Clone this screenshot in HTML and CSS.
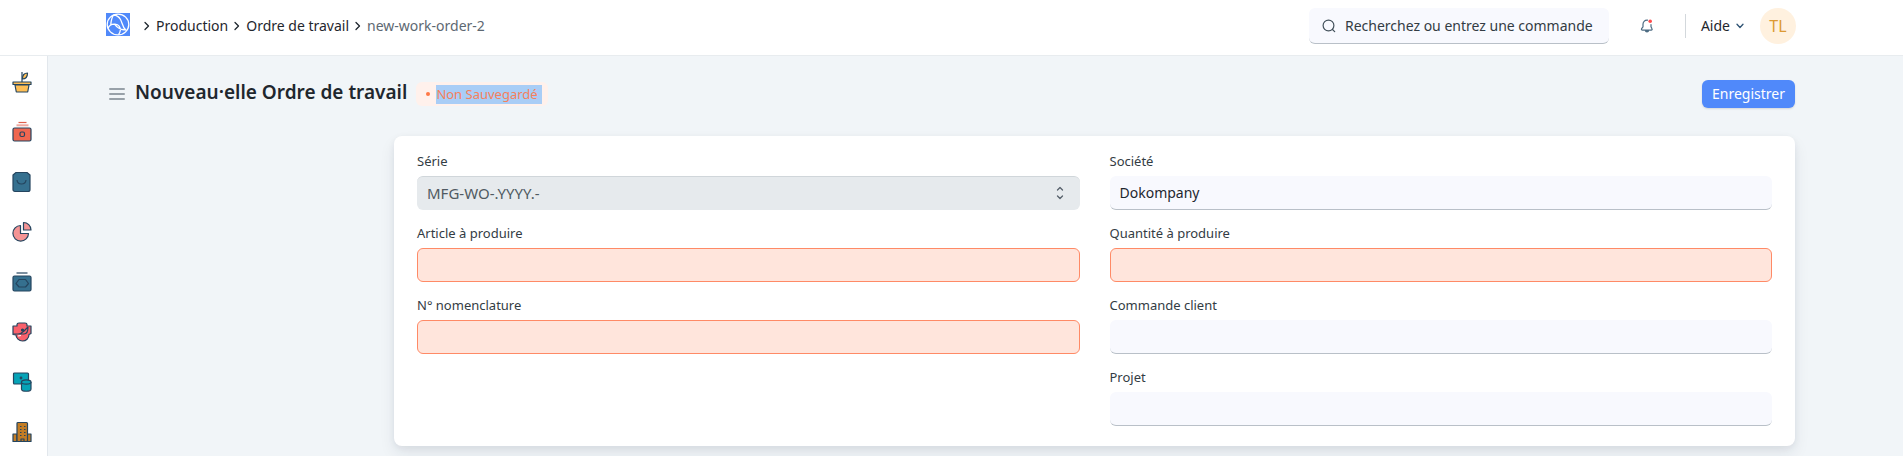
FILE: index.html
```html
<!DOCTYPE html>
<html lang="fr">
<head>
<meta charset="utf-8">
<meta name="viewport" content="width=device-width, initial-scale=1">
<title>Nouveau·elle Ordre de travail</title>
<link rel="stylesheet" href="styles.css">
</head>
<body>
<header class="navbar">
  <a class="logo" href="#" aria-label="Accueil">
    <svg width="24" height="23" viewBox="0 0 24 23" fill="none" stroke="#fff" stroke-width="1.3"><rect width="24" height="23" fill="#5089fa" stroke="none"/><ellipse cx="12" cy="11.500" rx="10.800" ry="10.400"/><path d="M7.500 2c3 .2 5.500 1.800 7 4.500 1.800 3.300 2.200 7.500 5.300 11M7.500 2C5.800 4.500 5 7.500 4.700 12.500M2 15.500c1-3 4-4.500 7-4.300 4 .3 5.800 3.300 5.300 6.300-.2 1.500-.8 2.800-1.800 4.200M8.500 11.200c3.500 4.600 7 6.300 11.500 5.300"/></svg>
  </a>
  <nav class="breadcrumb" aria-label="Fil d'Ariane">
    <svg class="sep" width="8" height="10" viewBox="0 0 8 10"><path d="M2 1.500 5.500 5 2 8.500"/></svg>
    <a href="#">Production</a>
    <svg class="sep" width="8" height="10" viewBox="0 0 8 10"><path d="M2 1.500 5.500 5 2 8.500"/></svg>
    <a href="#">Ordre de travail</a>
    <svg class="sep" width="8" height="10" viewBox="0 0 8 10"><path d="M2 1.500 5.500 5 2 8.500"/></svg>
    <a class="current" href="#">new-work-order-2</a>
  </nav>
  <label class="search">
    <svg width="14" height="14" viewBox="0 0 14 14" fill="none" stroke="#43515b" stroke-width="1.2" stroke-linecap="round"><circle cx="6.500" cy="6.500" r="5.400"/><path d="m10.500 10.500 2.200 2.200"/></svg>
    <input type="text" placeholder="Recherchez ou entrez une commande" aria-label="Recherchez ou entrez une commande">
  </label>
  <button class="bell" type="button" aria-label="Notifications">
    <svg width="14" height="14" viewBox="0 0 14 14" fill="none" stroke="#4c6b82" stroke-width="1.200" stroke-linejoin="round" stroke-linecap="round"><path d="M7.500 1.200C4.500 1 3 3 3 5.200v2.600L1.600 9.700c-.4.700 0 1.400.8 1.400h8.800c.8 0 1.200-.7.800-1.400L11 7.800V5.600"/><path d="M5.500 11.500c0 2 3 2 3 0z" fill="#4c6b82"/><circle cx="10.200" cy="2.200" r="1.800" fill="#ff4d4d" stroke="none"/></svg>
  </button>
  <span class="divider"></span>
  <button class="help" type="button">Aide
    <svg width="8" height="6" viewBox="0 0 8 6" fill="none" stroke="#2f5374" stroke-width="1.300" stroke-linecap="round" stroke-linejoin="round"><path d="M1 1.200 4 4.500l3-3.300"/></svg>
  </button>
  <button class="avatar" type="button">TL</button>
</header>

<div class="layout">
  <nav class="rail" aria-label="Modules">
    <a href="#" aria-label="Agriculture"><svg viewBox="0 0 20 22"><path class="yellow" d="M3 14h14l-1.300 7H4.300z"/><path class="yellow" d="M1 11h18v2.500H1z"/><path d="M10 11V1"/><path class="yellow" d="M10.500 8c-.2-4 1.800-6 5-6 0 3.500-1.500 6-5 6z"/></svg></a>
    <a href="#" aria-label="Caisse"><svg viewBox="0 0 20 22"><path d="M6.500 1.500h8" style="stroke:#e0604c"/><path d="M4.500 4.300h12" style="stroke:#f0a9a0;stroke-width:2"/><rect class="red" x="1" y="7" width="18" height="13" rx="1.500"/><rect x="8" y="11" width="4.500" height="4.500" rx="1.500" fill="none"/></svg></a>
    <a href="#" aria-label="Achats"><svg viewBox="0 0 20 22"><path class="blue" d="M4 1.500h11L18 4v14.500c0 1.200-.7 2-2 2H3c-1.300 0-2-.8-2-2V4z"/><path d="M5 9c.2 2 1.800 4 4.500 4s4.300-2 4.500-4" fill="none"/></svg></a>
    <a href="#" aria-label="Rapports"><svg viewBox="0 0 20 22"><path class="pink" d="M8.500 4.500v8h8a7.800 7.800 0 1 1-8-8z"/><path class="pink" d="M11.500 1.500c4 0 7.500 3.200 7.500 7.500h-7.500z"/></svg></a>
    <a href="#" aria-label="Paie"><svg viewBox="0 0 20 22"><path d="M4.500 2h11"/><rect class="blue" x="1" y="5" width="18" height="15" rx="1.500"/><path class="blue" d="M7 8.500h6.500l3 4-3 3.500H7l-3-3.500z"/></svg></a>
    <a href="#" aria-label="Soudure"><svg viewBox="0 0 20 22"><path class="rose" d="M5 5V3.500c0-1 1-1.500 2-1.500h6c1 0 2 .5 2 1.500V5h4v7.500l-2 1c0 4-3 6.500-6.500 6.500S4 17 4 14l-3-.5V5z"/><path d="M1 13h5c3 0 4-1 6-3l4-4M4 13h8c3 0 4-3 4-7" fill="none"/><circle cx="10.500" cy="9" r="1" fill="#25455f"/><path d="m6 15 3-.5" style="stroke:#fff"/></svg></a>
    <a href="#" aria-label="Stock"><svg viewBox="0 0 20 22"><rect class="teal" x="1.500" y="2" width="15" height="11" rx="1"/><circle cx="9" cy="7" r=".8"/><path class="teal" d="M9.500 11v7c0 3 9.500 3 9.500 0v-7"/><ellipse class="teal" cx="14.250" cy="11" rx="4.750" ry="2.200"/></svg></a>
    <a href="#" aria-label="Société"><svg viewBox="0 0 20 22"><path class="brown" d="M1 13h4v7.500H1zM15 13h4v7.500h-4z"/><rect class="brown" x="5" y="1.500" width="10.500" height="19" rx="1"/><path d="M8 5.500h1.500M12 5.500h1.500M8 8.500h1.500M12 8.500h1.500M8 11.500h1.500M12 11.500h1.500M8 14.500h1.500M12 14.500h1.500M9 20v-2h3v2"/></svg></a>
  </nav>

  <main class="page">
    <div class="page-head">
      <button class="menu" type="button" aria-label="Menu"><span></span><span></span><span></span></button>
      <h1>Nouveau·elle Ordre de travail</h1>
      <span class="status"><mark>Non Sauvegardé</mark></span>
      <button class="save" type="button">Enregistrer</button>
    </div>
    <form class="card">
      <div class="column">
        <div class="field">
          <label for="serie">Série</label>
          <div class="select-wrap">
            <select id="serie"><option>MFG-WO-.YYYY.-</option></select>
            <svg width="8" height="14" viewBox="0 0 8 14" fill="none" stroke="#56616b" stroke-width="1.300" stroke-linecap="round" stroke-linejoin="round"><path d="M1.500 4 4 1.500 6.500 4M1.500 10 4 12.500 6.500 10"/></svg>
          </div>
        </div>
        <div class="field"><label for="article">Article à produire</label><input class="required" id="article" type="text"></div>
        <div class="field"><label for="bom">N° nomenclature</label><input class="required" id="bom" type="text"></div>
      </div>
      <div class="column">
        <div class="field"><label for="societe">Société</label><input id="societe" type="text" value="Dokompany"></div>
        <div class="field"><label for="qty">Quantité à produire</label><input class="required" id="qty" type="text"></div>
        <div class="field"><label for="commande">Commande client</label><input id="commande" type="text"></div>
        <div class="field"><label for="projet">Projet</label><input id="projet" type="text"></div>
      </div>
    </form>
  </main>
</div>
</body>
</html>
```
FILE: styles.css
```css
* { box-sizing: border-box; }
body {
  margin: 0;
  background: #f1f5f8;
  color: #1f272e;
  font: 14px/20px "Noto Sans", "Open Sans", sans-serif;
}
a { color: inherit; text-decoration: none; }
button, input, select { font: inherit; color: inherit; border: 0; margin: 0; padding: 0; }
button { background: none; cursor: pointer; }
svg { display: block; flex: none; }

.navbar {
  display: flex;
  align-items: center;
  height: 56px;
  padding: 0 107px 3px 106px;
  background: #fff;
  border-bottom: 1px solid #e8ecef;
}
.logo { padding-bottom: 3px; }
.breadcrumb { display: flex; align-items: center; gap: 5px; margin: 0 auto 0 13px; padding-bottom: 1px; white-space: nowrap; }
.breadcrumb .current { color: #5d6872; }
.sep { fill: none; stroke: #1f272e; stroke-width: 1.3; stroke-linecap: round; stroke-linejoin: round; }
.search {
  display: flex;
  align-items: center;
  gap: 9px;
  width: 300px;
  height: 36px;
  padding: 0 12px 0 13px;
  border-radius: 6px;
  background: #f8f9fe;
  border-bottom: 1px solid #b9c0c8;
}
.search input { flex: 1; min-width: 0; background: none; }
.search input::placeholder { color: #333c44; opacity: 1; }
.bell { margin-left: 31px; }
.divider { width: 1px; height: 24px; margin: 0 15px 0 31px; background: #d3d8dc; }
.help { display: flex; align-items: center; gap: 6px; }
.avatar {
  width: 36px;
  height: 36px;
  margin-left: 16px;
  border-radius: 50%;
  background: #fff1df;
  color: #dc9a34;
  font-size: 16px;
}

.layout { display: flex; min-height: calc(100vh - 56px); }
.rail {
  display: flex;
  flex-direction: column;
  gap: 2px;
  flex: none;
  width: 48px;
  padding: 2px 3px 0 0;
  background: #fff;
  border-right: 1px solid #e2e7ec;
}
.rail a { display: flex; align-items: center; justify-content: center; height: 48px; }
.rail svg { width: 20px; height: 22px; fill: none; stroke: #25455f; stroke-width: 1.2; stroke-linejoin: round; }
.rail .yellow { fill: #ffbf55; }
.rail .red { fill: #ee6650; }
.rail .blue { fill: #35708f; }
.rail .pink { fill: #f49494; }
.rail .rose { fill: #f9606b; }
.rail .teal { fill: #06a3b7; }
.rail .brown { fill: #c27c24; }

.page { flex: 1; min-width: 0; padding: 24px 108px 10px 61px; }
.page-head { display: flex; align-items: center; height: 28px; margin-bottom: 28px; white-space: nowrap; }
.menu { display: flex; flex-direction: column; gap: 3px; width: 16px; }
.menu span { height: 2px; border-radius: 1px; background: #98a1a9; }
h1 { margin: 0 9px 4px 10px; font-size: 19px; line-height: 24px; font-weight: 600; }
.status {
  display: flex;
  align-items: center;
  gap: 6px;
  height: 24px;
  padding: 0 6px 0 10px;
  border-radius: 6px;
  background: #fff1ec;
  font-size: 13px;
}
.status::before { content: ""; width: 4px; height: 4px; border-radius: 50%; background: #ff7846; }
.status mark { padding-right: 4px; background: #a9cdf6; color: #f5805c; line-height: 19px; }
.save {
  height: 28px;
  margin-left: auto;
  padding: 0 10px;
  border-radius: 6px;
  background: #5089fa;
  color: #fff;
  box-shadow: 0 1px 2px #00000020;
}

.card {
  display: grid;
  grid-template-columns: 1fr 1fr;
  gap: 30px;
  margin-left: 285px;
  padding: 15px 23px 20px;
  border-radius: 8px;
  background: #fff;
  box-shadow: 0 8px 16px #1f273e14, 0 2px 6px #1f273e10;
}
.column { display: flex; flex-direction: column; gap: 13px; min-width: 0; }
.field { display: flex; flex-direction: column; gap: 5px; }
.field label { color: #333c44; font-size: 13px; line-height: 20px; }
.field input, .field select {
  width: 100%;
  height: 34px;
  padding: 0 10px;
  border-radius: 6px;
  background: #f8f9fe;
  border-bottom: 1px solid #b9c0c8;
}
.field input.required { background: #ffe5dc; border: 1px solid #ff8a66; }
.select-wrap { display: grid; align-items: center; }
.select-wrap > * { grid-area: 1 / 1; }
.select-wrap svg { justify-self: end; margin-right: 16px; pointer-events: none; }
.field select {
  appearance: none;
  padding-bottom: 2px;
  background: #e6eaed;
  border-top: 1px solid #d0d6da;
  border-bottom: 0;
  color: #505a62;
  font-size: 15px;
}
```
